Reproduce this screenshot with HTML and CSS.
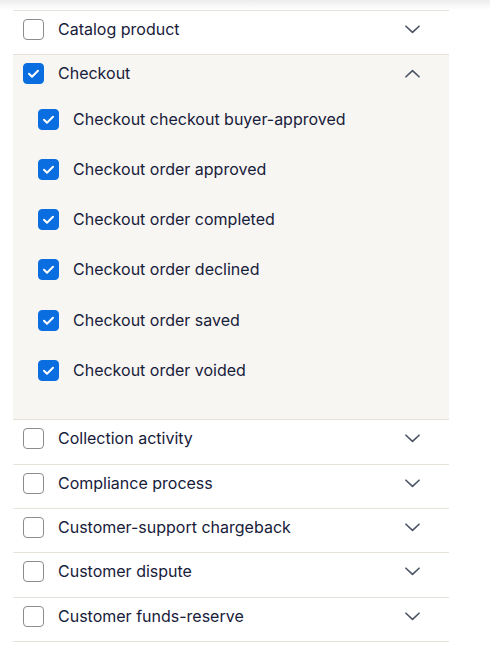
FILE: index.html
```html
<!DOCTYPE html>
<html lang="en">
<head>
<meta charset="utf-8">
<link rel="stylesheet" href="styles.css">
</head>
<body>
<div class="shade"></div>
<div class="list">
  <div class="group">
    <div class="head">
      <span class="box"></span>
      <span class="label">Catalog product</span>
      <svg class="chev" viewBox="0 0 16 9"><path d="M1 1l7 6.5L15 1"/></svg>
    </div>
  </div>
  <div class="group open">
    <div class="head">
      <span class="box on"><svg viewBox="0 0 21 21"><path d="M6 10.8l3 3 6-6"/></svg></span>
      <span class="label">Checkout</span>
      <svg class="chev" viewBox="0 0 16 9"><path d="M1 8L8 1.5 15 8"/></svg>
    </div>
    <div class="children">
      <div class="child"><span class="box on"><svg viewBox="0 0 21 21"><path d="M6 10.8l3 3 6-6"/></svg></span><span class="label">Checkout checkout buyer-approved</span></div>
      <div class="child"><span class="box on"><svg viewBox="0 0 21 21"><path d="M6 10.8l3 3 6-6"/></svg></span><span class="label">Checkout order approved</span></div>
      <div class="child"><span class="box on"><svg viewBox="0 0 21 21"><path d="M6 10.8l3 3 6-6"/></svg></span><span class="label">Checkout order completed</span></div>
      <div class="child"><span class="box on"><svg viewBox="0 0 21 21"><path d="M6 10.8l3 3 6-6"/></svg></span><span class="label">Checkout order declined</span></div>
      <div class="child"><span class="box on"><svg viewBox="0 0 21 21"><path d="M6 10.8l3 3 6-6"/></svg></span><span class="label">Checkout order saved</span></div>
      <div class="child"><span class="box on"><svg viewBox="0 0 21 21"><path d="M6 10.8l3 3 6-6"/></svg></span><span class="label">Checkout order voided</span></div>
    </div>
  </div>
  <div class="group">
    <div class="head">
      <span class="box"></span>
      <span class="label">Collection activity</span>
      <svg class="chev" viewBox="0 0 16 9"><path d="M1 1l7 6.5L15 1"/></svg>
    </div>
  </div>
  <div class="group">
    <div class="head">
      <span class="box"></span>
      <span class="label">Compliance process</span>
      <svg class="chev" viewBox="0 0 16 9"><path d="M1 1l7 6.5L15 1"/></svg>
    </div>
  </div>
  <div class="group">
    <div class="head">
      <span class="box"></span>
      <span class="label">Customer-support chargeback</span>
      <svg class="chev" viewBox="0 0 16 9"><path d="M1 1l7 6.5L15 1"/></svg>
    </div>
  </div>
  <div class="group">
    <div class="head">
      <span class="box"></span>
      <span class="label">Customer dispute</span>
      <svg class="chev" viewBox="0 0 16 9"><path d="M1 1l7 6.5L15 1"/></svg>
    </div>
  </div>
  <div class="group">
    <div class="head">
      <span class="box"></span>
      <span class="label">Customer funds-reserve</span>
      <svg class="chev" viewBox="0 0 16 9"><path d="M1 1l7 6.5L15 1"/></svg>
    </div>
  </div>
</div>
</body>
</html>
```
FILE: styles.css
```css
html, body {
  margin: 0;
  padding: 0;
  background: #ffffff;
}
body {
  font-family: Inter, "Noto Sans", sans-serif;
  font-size: 16px;
  color: #17203a;
}
.shade {
  height: 10px;
  background: linear-gradient(to bottom, #ececec 0%, #f7f7f7 50%, #ffffff 100%);
}
.list {
  margin-left: 13px;
  width: 436px;
  border-bottom: 1px solid #e6e1d9;
}
.group {
  border-top: 1px solid #e6e1d9;
}
.group.open {
  background: #f7f6f3;
  padding-bottom: 38.5px;
}
.head {
  height: 43.4px;
  box-sizing: border-box;
  display: flex;
  align-items: flex-start;
  padding: 8px 29px 0 10px;
}
.head .label, .child .label {
  flex: 1;
  line-height: 21px;
  margin-left: 14px;
  white-space: nowrap;
}
.box {
  width: 21px;
  height: 21px;
  box-sizing: border-box;
  border: 1px solid #8c8c8c;
  border-radius: 4px;
  background: #fff;
  flex: none;
  display: flex;
}
.box.on {
  background: #0a6de0;
  border-color: #0a6de0;
}
.box svg {
  width: 21px;
  height: 21px;
  margin: -1px;
  fill: none;
  stroke: #fff;
  stroke-width: 2;
  stroke-linecap: round;
  stroke-linejoin: round;
}
.chev {
  width: 15px;
  height: 9px;
  margin-top: 6px;
  fill: none;
  stroke: #4a5263;
  stroke-width: 1.7;
  stroke-linecap: round;
  stroke-linejoin: round;
}
.children {
  display: flex;
  flex-direction: column;
  gap: 29.2px;
  padding: 10px 0 0 25px;
}
.child {
  display: flex;
  align-items: center;
}
```
